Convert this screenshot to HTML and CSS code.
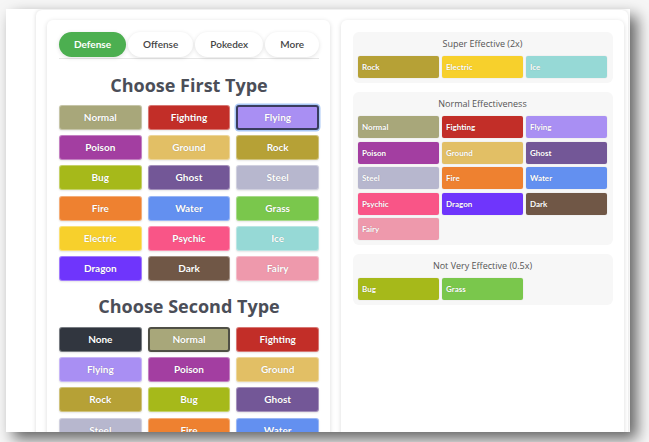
FILE: index.html
```html
<!DOCTYPE html>
<html>
<head>
<meta charset="utf-8">
<link rel="stylesheet" href="styles.css">
</head>
<body>
<div class="window">
  <div class="app">
    <div class="card left">
      <div class="tabs">
        <div class="tab active">Defense</div>
        <div class="tab">Offense</div>
        <div class="tab">Pokedex</div>
        <div class="tab">More</div>
      </div>
      <h2 class="heading">Choose First Type</h2>
      <div class="grid">
        <div class="btn normal">Normal</div>
        <div class="btn fighting">Fighting</div>
        <div class="btn flying focused">Flying</div>
        <div class="btn poison">Poison</div>
        <div class="btn ground">Ground</div>
        <div class="btn rock">Rock</div>
        <div class="btn bug">Bug</div>
        <div class="btn ghost">Ghost</div>
        <div class="btn steel">Steel</div>
        <div class="btn fire">Fire</div>
        <div class="btn water">Water</div>
        <div class="btn grass">Grass</div>
        <div class="btn electric">Electric</div>
        <div class="btn psychic">Psychic</div>
        <div class="btn ice">Ice</div>
        <div class="btn dragon">Dragon</div>
        <div class="btn dark">Dark</div>
        <div class="btn fairy">Fairy</div>
      </div>
      <h2 class="heading second">Choose Second Type</h2>
      <div class="grid">
        <div class="btn none">None</div>
        <div class="btn normal selected">Normal</div>
        <div class="btn fighting">Fighting</div>
        <div class="btn flying">Flying</div>
        <div class="btn poison">Poison</div>
        <div class="btn ground">Ground</div>
        <div class="btn rock">Rock</div>
        <div class="btn bug">Bug</div>
        <div class="btn ghost">Ghost</div>
        <div class="btn steel">Steel</div>
        <div class="btn fire">Fire</div>
        <div class="btn water">Water</div>
      </div>
    </div>
    <div class="card right">
      <div class="section">
        <div class="title">Super Effective (2x)</div>
        <div class="chips">
          <div class="chip rock">Rock</div>
          <div class="chip electric">Electric</div>
          <div class="chip ice">Ice</div>
        </div>
      </div>
      <div class="section">
        <div class="title">Normal Effectiveness</div>
        <div class="chips">
          <div class="chip normal">Normal</div>
          <div class="chip fighting">Fighting</div>
          <div class="chip flying">Flying</div>
          <div class="chip poison">Poison</div>
          <div class="chip ground">Ground</div>
          <div class="chip ghost">Ghost</div>
          <div class="chip steel">Steel</div>
          <div class="chip fire">Fire</div>
          <div class="chip water">Water</div>
          <div class="chip psychic">Psychic</div>
          <div class="chip dragon">Dragon</div>
          <div class="chip dark">Dark</div>
          <div class="chip fairy">Fairy</div>
        </div>
      </div>
      <div class="section">
        <div class="title">Not Very Effective (0.5x)</div>
        <div class="chips">
          <div class="chip bug">Bug</div>
          <div class="chip grass">Grass</div>
        </div>
      </div>
    </div>
  </div>
</div>
</body>
</html>
```
FILE: styles.css
```css
html, body {
  margin: 0;
  padding: 0;
  background: #f6f6f6;
  overflow: hidden;
}
body {
  width: 649px;
  height: 442px;
}
.window {
  margin: 9px 0 0 6px;
  width: 624px;
  height: 423px;
  background: #fff;
  overflow: hidden;
  box-shadow: 7px 7px 14px rgba(0, 0, 0, 0.6);
}
.app {
  margin: 1px 0 0 30px;
  width: 592px;
  height: 460px;
  box-sizing: border-box;
  padding: 10px 0 0 11px;
  border-radius: 6px;
  box-shadow: 0 0 4px rgba(0, 0, 0, 0.15);
  display: flex;
  gap: 11px;
  background: #fff;
}
.card {
  width: 283px;
  flex: none;
  background: #fff;
  border-radius: 6px;
  box-shadow: 0 1px 5px rgba(0, 0, 0, 0.14);
  box-sizing: border-box;
}
.left {
  padding: 12px 11px 0 12px;
}
.right {
  padding: 12px 11px 0 12px;
}
.tabs {
  display: flex;
  gap: 2px;
  padding-bottom: 1px;
  border-bottom: 1px solid #e6e6e6;
}
.tab {
  height: 25px;
  line-height: 25px;
  border-radius: 13px;
  background: #fff;
  box-shadow: 0 1px 4px rgba(0, 0, 0, 0.12);
  font-family: "Lato", sans-serif;
  font-size: 10px;
  font-weight: 600;
  color: #444;
  text-align: center;
  flex: auto;
}
.tab.active {
  background: #4caf50;
  color: #fff;
  font-weight: 700;
}
.heading {
  margin: 15px 0 9px;
  font-family: "Open Sans", sans-serif;
  font-weight: 700;
  font-size: 18px;
  line-height: 22px;
  color: #4b4e58;
  text-align: center;
}
.heading.second {
  margin: 14px 0 10px;
}
.grid {
  display: grid;
  grid-template-columns: repeat(3, 1fr);
  column-gap: 6px;
  row-gap: 5.2px;
}
.btn {
  height: 25px;
  line-height: 25px;
  box-sizing: border-box;
  border-radius: 3px;
  border: 1px solid rgba(255, 255, 255, 0.35);
  text-align: center;
  color: #fff;
  font-family: "Lato", sans-serif;
  font-weight: 700;
  font-size: 10px;
  line-height: 23px;
  text-shadow: 0 0 1px rgba(0, 0, 0, 0.25);
  box-shadow: 0 1px 2px rgba(0, 0, 0, 0.1);
}
.btn.focused {
  border: 2px solid #3a3d5e;
  line-height: 21px;
  box-shadow: 0 0 0 1.5px #a9c8f5;
}
.btn.selected {
  border: 2px solid #4f4f45;
  line-height: 21px;
}
.section {
  background: #f7f7f7;
  border-radius: 6px;
  padding: 5px 6px 5px 5px;
  margin-bottom: 9px;
}
.title {
  font-family: "Open Sans", sans-serif;
  font-size: 9px;
  line-height: 14px;
  color: #555;
  text-align: center;
  margin-bottom: 5px;
}
.chips {
  display: grid;
  grid-template-columns: repeat(3, 81px);
  column-gap: 3px;
  row-gap: 3.5px;
}
.chip {
  height: 22px;
  line-height: 22px;
  border-radius: 2px;
  padding-left: 4px;
  color: #fff;
  font-family: "Lato", sans-serif;
  font-weight: 700;
  font-size: 8px;
  text-shadow: 0 0 1px rgba(0, 0, 0, 0.25);
  box-shadow: 0 0 0 0.5px rgba(0, 0, 0, 0.05);
}
.none { background: #31363f; }
.normal { background: #a8a77a; }
.fighting { background: #c22e28; }
.flying { background: #a98ff3; }
.poison { background: #a33ea1; }
.ground { background: #e2bf65; }
.rock { background: #b6a136; }
.bug { background: #a6b91a; }
.ghost { background: #735797; }
.steel { background: #b7b7ce; }
.fire { background: #ee8130; }
.water { background: #6390f0; }
.grass { background: #7ac74c; }
.electric { background: #f7d02c; }
.psychic { background: #f95587; }
.ice { background: #96d9d6; }
.dragon { background: #6f35fc; }
.dark { background: #705746; }
.fairy { background: #ee99ac; }
```
